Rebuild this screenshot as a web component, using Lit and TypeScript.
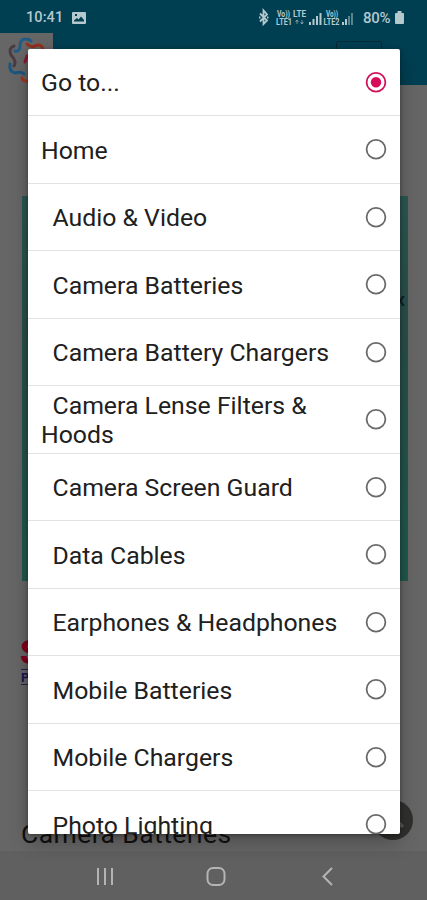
import { LitElement, html, css, svg } from "lit";
import { customElement, property } from "lit/decorators.js";

interface Option { label: string; nested: boolean; }

const OPTIONS: Option[] = [
  { label: "Go to...", nested: false },
  { label: "Home", nested: false },
  ...[
    "Audio & Video", "Camera Batteries", "Camera Battery Chargers",
    "Camera Lense Filters & Hoods", "Camera Screen Guard", "Data Cables",
    "Earphones & Headphones", "Mobile Batteries", "Mobile Chargers", "Photo Lighting",
  ].map((label) => ({ label, nested: true })),
];

@customElement("option-row")
class OptionRow extends LitElement {
  @property() label = "";
  @property({ type: Boolean }) nested = false;
  @property({ type: Boolean }) checked = false;

  static styles = css`
    :host { display: flex; align-items: center; height: 67.5px; box-sizing: border-box; border-bottom: 1.5px solid #e2e2e2; padding: 0 13px; }
    .label { flex: 1; font: 400 24.8px/29px Roboto, sans-serif; letter-spacing: 0; color: #202020; padding: 1.6px 25px 0 0; }
    .nested { text-indent: 11.5px; }
    .radio { display: block; width: 22px; height: 22px; flex: none; }
  `;

  render() {
    return html`
      <span class="label ${this.nested ? "nested" : ""}">${this.label}</span>
      <svg class="radio" viewBox="0 0 22 22" fill="none">
        <circle cx="11" cy="11.300" r="9.400" stroke=${this.checked ? "#cf1259" : "#6a6a6a"} stroke-width="1.800" />
        ${this.checked ? svg`<circle cx="11" cy="11.3" r="5.2" fill="#d80b5a" />` : ""}
      </svg>`;
  }
}

@customElement("status-bar")
class StatusBar extends LitElement {
  static styles = css`
    :host { display: flex; align-items: center; height: 33px; box-sizing: border-box; padding: 2px 23px 0 26px; color: #b4c8ce; font: 500 14.5px/18px Roboto, sans-serif; }
    .time { width: 38px; letter-spacing: 0.1px; }
    .photo { width: 14px; height: 12px; margin-left: 8px; }
    .space { flex: 1; }
    .icons { width: 105px; height: 20px; }
    .net { font: 700 9px Roboto, sans-serif; fill: currentColor; }
    .pct { width: 31px; font-size: 15px; font-weight: 500; letter-spacing: -.3px; }
    .battery { width: 9px; height: 13px; margin-left: 1px; }
  `;

  render() {
    return html`
      <span class="time">10:41</span>
      <svg class="photo" viewBox="0 0 14 12"><path fill="currentColor" fill-rule="evenodd" d="M1 0h12q1 0 1 1v10q0 1-1 1H1q-1 0-1-1V1q0-1 1-1zM2 9.5h10V8L9 4.5 6.5 7.5 5 6 2 8.5zM3 2v2h2V2z" /></svg>
      <span class="space"></span>
      <svg class="icons" viewBox="0 0 105 20">
        <path d="M2 5.500l7 7-3.500 3.500V2.500L9 6.500l-7 7M1 9.500h1.500M9 9.500h1.500" fill="none" stroke="currentColor" stroke-width="1.800" />
        <text class="net" x="19" y="9" textLength="13" lengthAdjust="spacingAndGlyphs">Vo))</text>
        <text class="net" x="18" y="17" textLength="16" lengthAdjust="spacingAndGlyphs">LTE1</text>
        <text class="net" x="35" y="9" textLength="13" lengthAdjust="spacingAndGlyphs">LTE</text>
        <path d="M39 16v-4M37.500 14l1.500-2 1.500 2M44 12v4M42.500 14l1.500 2 1.500-2" fill="none" stroke="currentColor" opacity=".6" />
        <path d="M51 14h2v3h-2zM54.500 11h2v6h-2zM58 8h2v9h-2zM61.500 5h2v12h-2z" fill="currentColor" />
        <text class="net" x="68" y="9" textLength="12" lengthAdjust="spacingAndGlyphs">Vo))</text>
        <text class="net" x="65.500" y="17" textLength="16" lengthAdjust="spacingAndGlyphs">LTE2</text>
        <path d="M84 14h2v3h-2zM87 11h2v6h-2z" fill="currentColor" />
        <path d="M90 8h2v9h-2zM93 5h2v12h-2z" fill="currentColor" opacity=".5" />
      </svg>
      <span class="pct">80%</span>
      <svg class="battery" viewBox="0 0 9 13"><path fill="currentColor" d="M2.500 0h4v2H8q1 0 1 1v9q0 1-1 1H1q-1 0-1-1V3q0-1 1-1h1.500z" /></svg>`;
  }
}

@customElement("app-root")
class AppRoot extends LitElement {
  static styles = css`
    :host { display: block; position: relative; width: 427px; height: 900px; overflow: hidden; background: #666; font-family: Roboto, sans-serif; }
    .page { display: flex; flex-direction: column; height: 900px; }
    .top { background: #003f52; height: 85px; flex: none; }
    .brand { display: flex; height: 52px; justify-content: space-between; }
    .logo { width: 53px; height: 52px; background: #666; }
    .menu { width: 46px; height: 30px; box-sizing: border-box; border: 1.5px solid #062a35; border-radius: 2px; margin: 8px 45px 0 0; }
    .banner { display: flex; align-items: flex-start; justify-content: flex-end; margin: 111px 19px 0 22px; height: 385px; flex: none; box-sizing: border-box; background: linear-gradient(#2c5751, #294f4a 35%, #21574d 88%); }
    .banner span { font-size: 19px; font-weight: 500; line-height: 20px; margin: 94px 3px 0 0; color: #111f1f; }
    .seller { width: 100px; height: 50px; margin: 57px 0 0 20px; flex: none; }
    .initial { font: 900 33px Roboto, sans-serif; fill: #84001c; }
    .small { font: 700 13px Roboto, sans-serif; fill: #17174f; }
    .heading { margin: 129px 0 0 21px; font-size: 26.5px; line-height: 34px; letter-spacing: .42px; color: #111; white-space: nowrap; }
    .nav { margin-top: auto; height: 49px; background: #606060; display: flex; flex: none; }
    .nav svg { width: 427px; height: 49px; }
    .up { position: absolute; left: 373px; top: 800px; width: 40px; height: 40px; }
    .dialog { position: absolute; left: 28px; top: 48.5px; width: 371.5px; height: 785.5px; overflow: hidden; border-radius: 2px; background: #fff; }
    .shade { position: absolute; left: 28px; top: 48.5px; width: 371.5px; height: 785.5px; border-radius: 2px; box-shadow: 0 8px 20px rgba(0,0,0,.26), 0 1px 4px rgba(0,0,0,.35); }
  `;

  render() {
    return html`
      <div class="page">
        <div class="top">
          <status-bar></status-bar>
          <div class="brand">
            <svg class="logo" viewBox="0 0 53 52" fill="none" stroke-width="3" stroke-linecap="round">
              <path stroke="#205c84" d="M15 18Q20 19 20 13Q20 6 25 6Q29 6 31 8" />
              <path stroke="#93301d" d="M27 11Q31 15 35 13Q42 10 43 17" />
              <path stroke="#4b3c44" d="M14 13Q8 15 11 22Q17 28 14 33" />
              <path stroke="#1d5780" d="M10 31Q9 39 15 40Q21 38 24 41" />
              <path stroke="#a33620" d="M22 45Q23 49 29 48" />
              <path stroke="#8b1733" d="M27 23L25 29" />
            </svg>
            <div class="menu"></div>
          </div>
        </div>
        <div class="banner"><span>x</span></div>
        <svg class="seller" viewBox="0 0 100 50">
          <text class="initial" x="0" y="26">S</text>
          <path d="M1 31.500h90M1 46.500h90" stroke="#24244e" />
          <text class="small" x="1" y="43.500">P</text>
        </svg>
        <div class="heading">Camera Batteries</div>
        <div class="nav">
          <svg viewBox="0 0 427 49" fill="none" stroke="#b4b4b4" stroke-width="2">
            <path d="M98 17v17M105 17v17M112 17v17" />
            <rect x="207.500" y="17" width="17" height="17" rx="5.500" />
            <path d="M332 17l-8.500 8.500 8.500 8.500" />
          </svg>
        </div>
      </div>
      <svg class="up" viewBox="0 0 40 40"><circle cx="20" cy="20" r="20" fill="#30302f" /><path d="M14 26l8-7 8 8" fill="none" stroke="#555" stroke-width="3.500" /></svg>
      <div class="shade"></div>
      <div class="dialog">
        ${OPTIONS.map((o, i) => html`<option-row .label=${o.label} .nested=${o.nested} .checked=${i === 0}></option-row>`)}
      </div>`;
  }
}
